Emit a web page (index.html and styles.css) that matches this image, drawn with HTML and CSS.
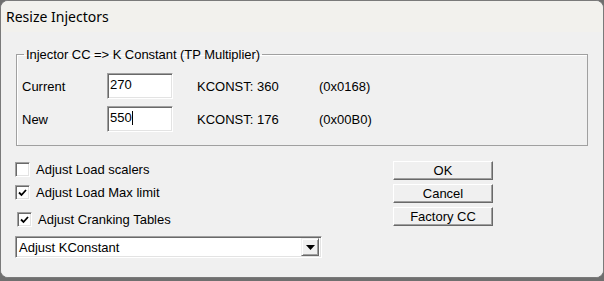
FILE: index.html
```html
<!DOCTYPE html>
<html lang="en">
  <head>
    <meta charset="UTF-8" />
    <meta name="viewport" content="width=device-width, initial-scale=1.0" />
    <title>Resize Injectors</title>
    <link rel="stylesheet" href="styles.css">
  </head>
  <body>
    <div class="window">
      <div class="titlebar">Resize Injectors</div>
      <div class="client">
        <!-- injector size group -->
        <fieldset class="group">
          <legend>Injector CC =&gt; K Constant (TP Multiplier)</legend>
          <div class="row">
            <span class="label">Current</span>
            <div class="edit">270</div>
            <span class="kconst">KCONST: 360</span>
            <span class="hex">(0x0168)</span>
          </div>
          <div class="row">
            <span class="label">New</span>
            <div class="edit">550<span class="caret"></span></div>
            <span class="kconst">KCONST: 176</span>
            <span class="hex">(0x00B0)</span>
          </div>
        </fieldset>

        <div class="bottom">
          <div class="options">
            <div class="check">
              <span class="box"></span>
              <span>Adjust Load scalers</span>
            </div>
            <div class="check">
              <span class="box">
                <svg width="9" height="8" viewBox="0 0 9 8"><path d="M1 3.5 L3.5 6 L8 1" fill="none" stroke="#000" stroke-width="1.8"/></svg>
              </span>
              <span>Adjust Load Max limit</span>
            </div>
            <div class="check check-last">
              <span class="box">
                <svg width="9" height="8" viewBox="0 0 9 8"><path d="M1 3.5 L3.5 6 L8 1" fill="none" stroke="#000" stroke-width="1.8"/></svg>
              </span>
              <span>Adjust Cranking Tables</span>
            </div>
            <div class="combo">
              <span class="combo-text">Adjust KConstant</span>
              <span class="drop">
                <svg width="9" height="5" viewBox="0 0 9 5"><path d="M0 0 H9 L4.5 5 Z" fill="#000"/></svg>
              </span>
            </div>
          </div>
          <div class="buttons">
            <button class="btn">OK</button>
            <button class="btn">Cancel</button>
            <button class="btn">Factory CC</button>
          </div>
        </div>
      </div>
    </div>
  </body>
</html>
```

FILE: styles.css
```css
/* desktop behind the dialog */
body {
  margin: 0;
  background: #6f6f6f;
  font-family: "Liberation Sans", Arial, sans-serif;
  font-size: 13px;
  color: #000;
}

/* dialog frame */
.window {
  box-sizing: border-box;
  width: 604px;
  height: 278px;
  border: 1px solid #7a7a7a;
  border-radius: 8px;
  background: #f0f0f0;
  overflow: hidden;
  display: flex;
  flex-direction: column;
}

.titlebar {
  height: 31px;
  flex-shrink: 0;
  background: #f2f1ed;
  font-family: "Noto Sans", sans-serif;
  font-size: 14px;
  line-height: 31px;
  padding-left: 5px;
}

.client {
  flex: 1;
  background: #f0f0f0;
}

/* group box */
.group {
  box-sizing: border-box;
  width: 572px;
  margin: 15px 0 0 15px;
  padding: 11px 0 13px 5px;
  border: 1px solid #a0a0a0;
  box-shadow: inset 1px 1px #fff;
}

.group legend {
  margin-left: 2px;
  padding: 0 2px;
  line-height: 15px;
  letter-spacing: -0.05px;
}

.row {
  display: flex;
  align-items: center;
  height: 26px;
}

.row + .row {
  margin-top: 7px;
}

.label {
  width: 85px;
}

/* sunken edit box */
.edit {
  box-sizing: border-box;
  width: 66px;
  height: 26px;
  padding: 3px 2px 0;
  line-height: 15px;
  background: #fff;
  border: 1px solid;
  border-color: #a0a0a0 #fff #fff #a0a0a0;
  box-shadow: inset 1px 1px #696969, inset -1px -1px #e3e3e3;
}

.caret {
  display: inline-block;
  width: 1px;
  height: 14px;
  background: #000;
  vertical-align: -3px;
}

.kconst {
  width: 122px;
  margin-left: 24px;
}

/* checkboxes, combo and buttons */
.bottom {
  display: flex;
  margin-top: 12px;
}

.options {
  width: 307px;
  margin-left: 14px;
}

.check {
  display: flex;
  align-items: center;
  height: 23px;
}

.check-last {
  margin-top: 4px;
  padding-left: 2px;
}

.box {
  box-sizing: border-box;
  width: 15px;
  height: 15px;
  margin-right: 6px;
  background: #fff;
  border: 1px solid;
  border-color: #a0a0a0 #fff #fff #a0a0a0;
  box-shadow: inset 1px 1px #696969, inset -1px -1px #e3e3e3;
  display: flex;
  align-items: center;
  justify-content: center;
}

.combo {
  box-sizing: border-box;
  height: 22px;
  margin-top: 5px;
  background: #fff;
  border: 1px solid;
  border-color: #a0a0a0 #fff #fff #a0a0a0;
  box-shadow: inset 1px 1px #696969, inset -1px -1px #e3e3e3;
  display: flex;
  align-items: center;
  padding: 0 2px 0 3px;
}

.combo-text {
  flex: 1;
}

.drop {
  box-sizing: border-box;
  width: 18px;
  height: 18px;
  background: #f0f0f0;
  border: 1px solid;
  border-color: #f0f0f0 #696969 #696969 #f0f0f0;
  box-shadow: inset 1px 1px #fff, inset -1px -1px #a0a0a0;
  display: flex;
  align-items: center;
  justify-content: center;
}

.buttons {
  margin-left: 71px;
  margin-top: 3px;
  display: flex;
  flex-direction: column;
  gap: 4px;
}

.btn {
  box-sizing: border-box;
  width: 100px;
  height: 19px;
  padding: 0;
  font-family: "Liberation Sans", Arial, sans-serif;
  font-size: 13px;
  line-height: 15px;
  color: #000;
  background: #f0f0f0;
  border: 1px solid;
  border-color: #fff #696969 #696969 #fff;
  box-shadow: inset -1px -1px #a0a0a0;
}
```
